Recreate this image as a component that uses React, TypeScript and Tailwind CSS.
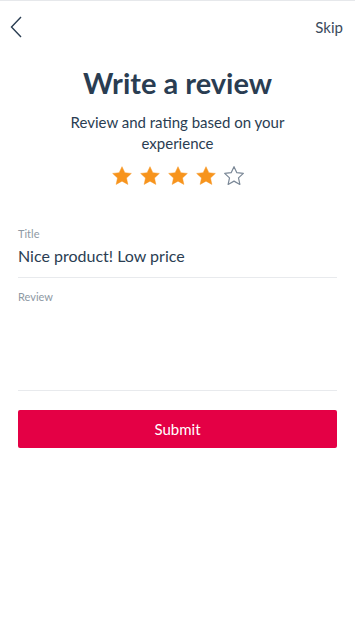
export default function App() {
  const filled = 4;
  return (
    <div
      className="w-[355px] h-[632px] bg-white border-t border-[#e6e8eb] text-[#2a3d52]"
      style={{ fontFamily: 'Lato, "Liberation Sans", sans-serif' }}
    >
      {/* Header */}
      <div className="flex items-center justify-between h-[52px] pl-[8px] pr-[12px]">
        <button className="w-[16px] h-[24px] flex items-center justify-center">
          <svg width="12" height="22" viewBox="0 0 12 22" fill="none">
            <path d="M11 1L1.5 11L11 21" stroke="#2a3d52" strokeWidth="1.4" />
          </svg>
        </button>
        <span className="text-[15px] text-[#3a4a5c]">Skip</span>
      </div>

      {/* Heading */}
      <div className="flex flex-col items-center">
        <h1 className="mt-[11px] text-[29px] font-bold leading-[38px]">Write a review</h1>
        <p className="mt-[10px] w-[240px] text-center text-[15px] leading-[21px]">
          Review and rating based on your experience
        </p>
        <div className="mt-[11px] flex gap-[6px]">
          {[0, 1, 2, 3, 4].map((i) => (
            <svg key={i} width="22" height="22" viewBox="0 0 24 24">
              <path
                d="M12 1.8l3.1 6.6 7.1.8-5.3 4.9 1.5 7.1L12 17.6l-6.4 3.6 1.5-7.1L1.8 9.2l7.1-.8z"
                fill={i < filled ? "#f7941d" : "none"}
                stroke={i < filled ? "#f7941d" : "#7a8796"}
                strokeWidth={i < filled ? 0.5 : 1.3}
                strokeLinejoin="round"
              />
            </svg>
          ))}
        </div>
      </div>

      {/* Form */}
      <div className="px-[18px] mt-[40px]">
        <div className="border-b border-[#e8eaed] pb-[10px]">
          <label className="block text-[11px] text-[#8e99a4] leading-[14px]">Title</label>
          <div className="mt-[4px] text-[16px] leading-[22px]">Nice product! Low price</div>
        </div>
        <div className="border-b border-[#e8eaed] h-[113px] pt-[12px]">
          <label className="block text-[11px] text-[#8e99a4] leading-[14px]">Review</label>
        </div>
        <button className="mt-[19px] w-full h-[38px] rounded-[2px] bg-[#e40045] text-white text-[15px]">
          Submit
        </button>
      </div>
    </div>
  );
}
